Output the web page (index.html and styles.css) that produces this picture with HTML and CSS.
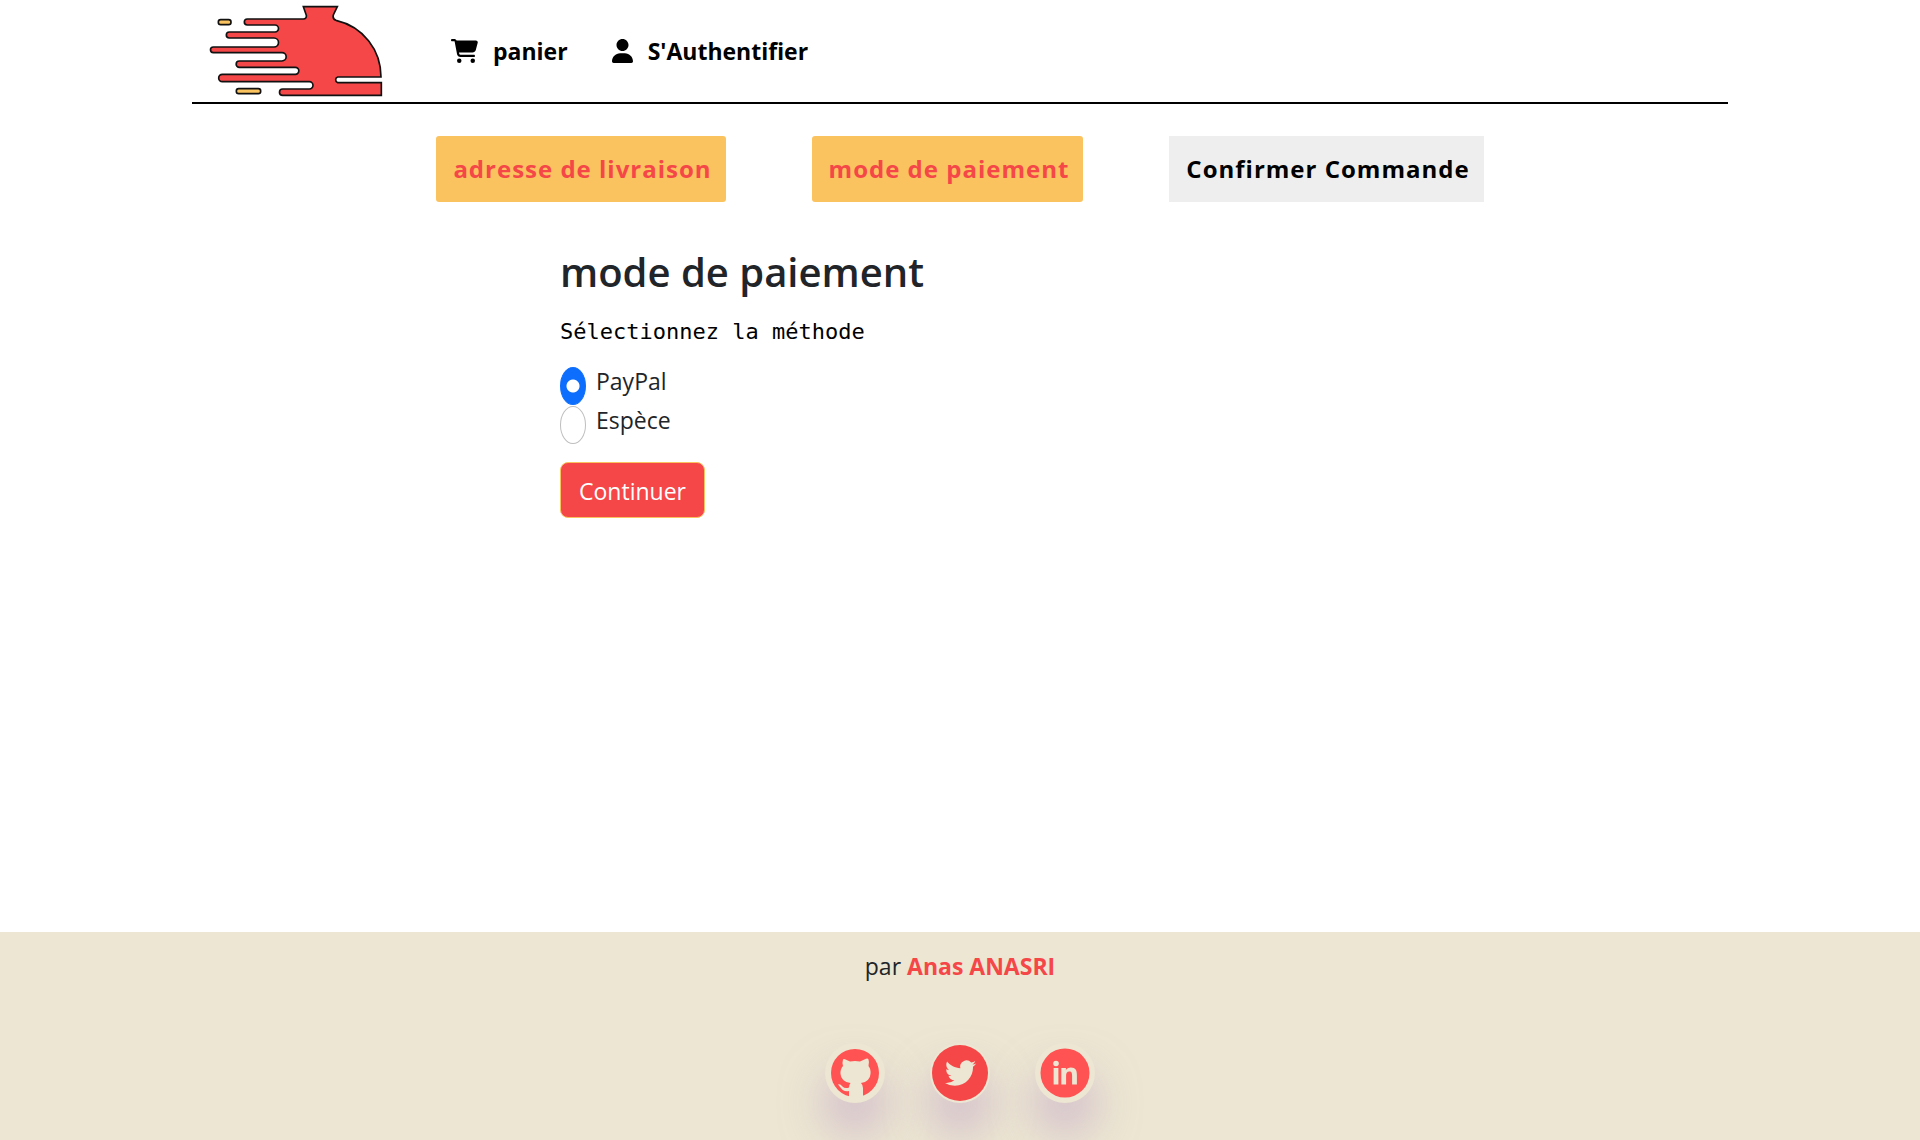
FILE: index.html
```html
<!DOCTYPE html>
<html lang="fr">
<head>
  <meta charset="utf-8">
  <meta name="viewport" content="width=device-width, initial-scale=1">
  <title>Mode de paiement</title>
  <link rel="stylesheet" href="styles.css">
</head>
<body>
  <header class="header">
    <a class="brand" href="#" aria-label="Accueil">
      <svg class="logo" viewBox="36 0 576 306" aria-hidden="true">
        <g stroke="#111" stroke-width="5" stroke-linejoin="miter">
          <path fill="#f54748" d="M370 20H472L460 45Q457 57 468 61C550 80 603 150 603 231H473a9 9 0 0 0 0 17H604V286H308a9.500 9.500 0 0 1 0-19H388a11 11 0 0 0 0-22H127a11 11 0 0 1 0-22H346a10.500 10.500 0 0 0 0-21H178a9.500 9.500 0 0 1 0-19H306a12 12 0 0 0 0-25H100a8.500 8.500 0 0 1 0-17H282a13 13 0 0 0 0-27H148a9 9 0 0 1 0-18H285a10 10 0 0 0 0-21H202a9 9 0 0 1 0-18H370Q380 57 379 46Z"/>
          <rect fill="#fbc35f" x="115" y="59" width="38" height="15" rx="7"/>
          <rect fill="#fbc35f" x="169" y="266" width="73" height="15" rx="7"/>
        </g>
      </svg>
    </a>
    <nav class="nav">
      <a class="nav-link" href="#">
        <svg class="icon-cart" viewBox="0 0 576 512" aria-hidden="true"><path d="M0 24C0 10.700 10.700 0 24 0H69.500c22 0 41.500 12.800 50.600 32h411c26.300 0 45.500 25 38.600 50.400l-41 152.300c-8.500 31.400-37 53.300-69.500 53.300H170.700l5.400 28.500c2.200 11.300 12.100 19.500 23.600 19.500H488c13.300 0 24 10.700 24 24s-10.700 24-24 24H199.700c-34.600 0-64.300-24.600-70.700-58.500L77.400 54.500c-.7-3.800-4-6.500-7.900-6.500H24C10.700 48 0 37.300 0 24zM128 464a48 48 0 1 1 96 0 48 48 0 1 1-96 0zm336-48a48 48 0 1 1 0 96 48 48 0 1 1 0-96z"/></svg>
        panier
      </a>
      <a class="nav-link" href="#">
        <svg class="icon-user" viewBox="0 0 448 512" aria-hidden="true"><path d="M224 256c70.700 0 128-57.310 128-128S294.700 0 224 0C153.300 0 96 57.310 96 128S153.300 256 224 256zM274.700 304H173.300C77.610 304 0 381.600 0 477.300 0 496.440 15.520 512 34.660 512h378.700C432.500 512 448 496.500 448 477.300 448 381.600 370.400 304 274.700 304z"/></svg>
        S'Authentifier
      </a>
    </nav>
  </header>

  <main class="main">
    <nav class="steps" aria-label="Étapes">
      <a class="step step-done" href="#">adresse de livraison</a>
      <a class="step step-done" href="#">mode de paiement</a>
      <span class="step">Confirmer Commande</span>
    </nav>

    <form class="payment">
      <h1 class="title">mode de paiement</h1>
      <fieldset class="methods">
        <legend class="legend">Sélectionnez la méthode</legend>
        <div class="method">
          <input class="radio" type="radio" name="method" id="paypal" checked>
          <label for="paypal">PayPal</label>
        </div>
        <div class="method">
          <input class="radio" type="radio" name="method" id="espece">
          <label for="espece">Espèce</label>
        </div>
      </fieldset>
      <button class="submit" type="submit">Continuer</button>
    </form>
  </main>

  <footer class="footer">
    <p class="credit">par <a class="author" href="#">Anas ANASRI</a></p>
    <div class="socials">
      <a class="social" href="#" aria-label="GitHub">
        <svg viewBox="0 0 60 60" aria-hidden="true"><circle cx="30" cy="30" r="24" fill="#ff5252"/><path fill="#ece6d2" d="M18 16.500Q18.500 15.500 20 16.200L25 18.500Q30 17.500 35 18.500L41 15.800Q43 15.200 43.500 16.500Q44.500 19 43.500 23Q46 26 45.500 31Q45 38.500 36 40Q38 42 38 45V55H24V48Q18 49 15.500 44.500L13 41.500Q15 40.500 17.500 43.500Q20 46 24 44.500Q24 41.500 25.500 40Q16 38.500 15.500 31Q15 26.500 18 23Q17 19.500 18 16.500Z"/></svg>
      </a>
      <a class="social" href="#" aria-label="Twitter">
        <svg viewBox="0 0 60 60" aria-hidden="true"><circle cx="30" cy="30" r="28" fill="#f54748"/><path fill="#ece6d2" transform="translate(15 14.500) scale(1.300)" d="M23.953 4.570a10 10 0 0 1-2.825.775 4.958 4.958 0 0 0 2.163-2.723c-.951.555-2.005.959-3.127 1.184a4.920 4.920 0 0 0-8.384 4.482C7.690 8.095 4.067 6.130 1.640 3.162a4.822 4.822 0 0 0-.666 2.475c0 1.710.87 3.213 2.188 4.096a4.904 4.904 0 0 1-2.228-.616v.06a4.923 4.923 0 0 0 3.946 4.827 4.996 4.996 0 0 1-2.212.085 4.936 4.936 0 0 0 4.604 3.417 9.867 9.867 0 0 1-6.102 2.105c-.39 0-.779-.023-1.170-.067a13.995 13.995 0 0 0 7.557 2.209c9.053 0 13.998-7.496 13.998-13.985 0-.21 0-.42-.015-.63A9.935 9.935 0 0 0 24 4.590z"/></svg>
      </a>
      <a class="social" href="#" aria-label="LinkedIn">
        <svg viewBox="0 0 60 60" aria-hidden="true"><circle cx="30" cy="30" r="24.500" fill="#ff5252"/><g fill="#ece6d2"><circle cx="21" cy="20.500" r="2.800"/><path d="M18.600 25h4.800V41.500h-4.800zM26.300 25h4.600v2.200c.9-1.600 2.600-2.600 5-2.600 4.700 0 6 3 6 7.300V41.500h-4.800v-8.600c0-2.200-.3-4.300-2.700-4.300-2.600 0-3.300 2-3.300 4.200V41.500h-4.800z"/></g></svg>
      </a>
    </div>
  </footer>
</body>
</html>
```
FILE: styles.css
```css
* {
  box-sizing: border-box;
}

body {
  margin: 0;
  min-height: 100vh;
  display: flex;
  flex-direction: column;
  background: #fff;
  color: #212529;
  font-family: "Segoe UI", "Open Sans", "Noto Sans", sans-serif;
  font-size: 23px;
  line-height: 38px;
}

a {
  color: inherit;
  text-decoration: none;
}

.header {
  width: 80%;
  margin: 0 auto;
  display: flex;
  align-items: center;
  gap: 67px;
  border-bottom: 2px solid #000;
}

.brand,
.logo {
  display: block;
}

.logo {
  width: 192px;
  height: 102px;
}

.nav {
  display: flex;
  flex-wrap: wrap;
  gap: 44px;
}

.nav-link {
  display: flex;
  align-items: center;
  gap: 15px;
  color: #000;
  font-weight: 700;
}

.icon-cart {
  width: 27px;
  height: 24px;
}

.icon-user {
  width: 21px;
  height: 24px;
}

.main {
  flex: 1;
  padding: 32px 16px;
}

.steps {
  display: flex;
  flex-wrap: wrap;
  justify-content: center;
  gap: 24px 86px;
}

.step {
  padding: 14px 14px 14px 17px;
  background: #eee;
  color: #000;
  font-size: 24px;
  font-weight: 700;
  letter-spacing: 1px;
}

.step-done {
  border-radius: 3px;
  background: #fbc35f;
  color: #f54748;
}

.payment {
  max-width: 800px;
  margin: 46px auto 0;
}

.title {
  margin: 0 0 16px;
  font-size: 40px;
  font-weight: 600;
  line-height: 48px;
}

.methods {
  margin: 0 0 16px;
  padding: 0;
  border: 0;
}

.legend {
  margin-bottom: 14px;
  padding: 0;
  color: #000;
  font-family: Consolas, "DejaVu Sans Mono", monospace;
  font-size: 22px;
  line-height: 40px;
}

.method {
  display: flex;
  align-items: flex-start;
  gap: 10px;
}

.method label {
  padding-bottom: 9px;
  line-height: 30px;
}

.radio {
  appearance: none;
  width: 26px;
  height: 38px;
  margin: 1px 0 0;
  border: 1px solid #bfbfbf;
  border-radius: 50%;
  background: #fff;
}

.radio:checked {
  border-color: #0d6efd;
  background: radial-gradient(circle, #fff 6px, #0d6efd 7px);
}

.submit {
  margin-top: 2px;
  padding: 9px 18px 7px;
  border: 1px solid #fbc35f;
  border-radius: 8px;
  background: #f54748;
  color: #fff;
  font: inherit;
}

.footer {
  padding: 15px 16px 37px;
  background: #ece6d2;
  text-align: center;
}

.credit {
  margin: 0 0 58px;
}

.author {
  color: #f54748;
  font-weight: 700;
}

.socials {
  display: flex;
  justify-content: center;
  gap: 45px;
}

.social {
  width: 60px;
  height: 60px;
  border-radius: 50%;
  background: #ece6d2;
  box-shadow: 0 30px 40px 3px rgba(198, 170, 200, 0.6);
}

.social svg {
  display: block;
}
```
